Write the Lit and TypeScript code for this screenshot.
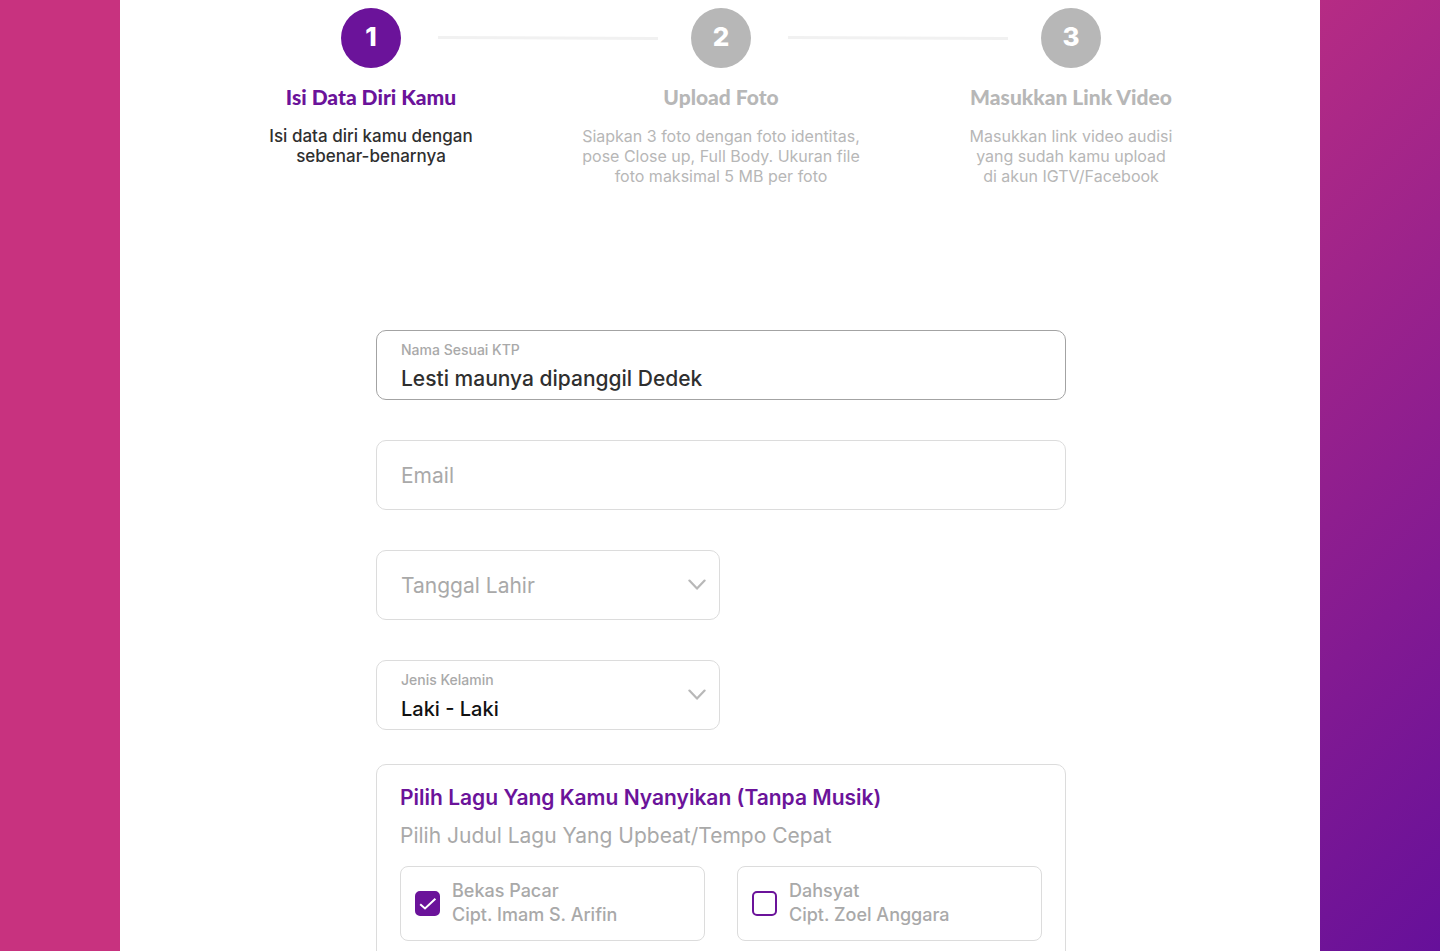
import { LitElement, html, css, svg } from "lit";
import { customElement, property, state } from "lit/decorators.js";
import { classMap } from "lit/directives/class-map.js";

interface Step {
  title: string;
  lines: string[];
}

interface Song {
  id: string;
  title: string;
  writer: string;
  picked: boolean;
}

const STEPS: Step[] = [
  { title: "Isi Data Diri Kamu", lines: ["Isi data diri kamu dengan", "sebenar-benarnya"] },
  {
    title: "Upload Foto",
    lines: [
      "Siapkan 3 foto dengan foto identitas,",
      "pose Close up, Full Body. Ukuran file",
      "foto maksimal 5 MB per foto",
    ],
  },
  {
    title: "Masukkan Link Video",
    lines: ["Masukkan link video audisi", "yang sudah kamu upload", "di akun IGTV/Facebook"],
  },
];

const chevron = html`
  <svg class="chevron" viewBox="0 0 18 12" width="18" height="12" aria-hidden="true">
    ${svg`<path d="M1.4 1.6 L9 9.6 L16.6 1.6" fill="none" stroke="#b8b8b8" stroke-width="2.2" stroke-linecap="round" stroke-linejoin="round"/>`}
  </svg>
`;

@customElement("step-progress")
class StepProgress extends LitElement {
  @property({ type: Number }) current = 1;

  static styles = css`
    :host {
      display: block;
      color: #b7b7b7;
    }
    .markers {
      display: flex;
      align-items: center;
      padding: 0 145px;
    }
    .marker {
      box-sizing: border-box;
      flex: none;
      display: grid;
      place-items: center;
      width: 60px;
      height: 60px;
      padding-bottom: 3px;
      border-radius: 50%;
      background: #b7b7b7;
      color: #fff;
      font-size: 26px;
      font-weight: 800;
    }
    .marker.active {
      background: #6b139a;
    }
    .connector {
      flex: 1;
      min-width: 0;
      height: 4px;
      margin: 0 33px 0 37px;
    }
    .steps {
      display: grid;
      grid-template-columns: repeat(3, 1fr);
      margin: 0;
      padding: 0;
      list-style: none;
      text-align: center;
    }
    .title {
      margin: 15px 0;
      font-family: Lato, sans-serif;
      font-size: 21px;
      font-weight: 900;
      line-height: 28px;
    }
    .text {
      margin: 0;
      font-size: 16px;
      font-weight: 400;
      line-height: 20px;
    }
    .line {
      display: block;
    }
    .active .title {
      color: #6b139a;
    }
    .active .text {
      color: #2f2f2f;
      font-size: 17px;
      font-weight: 500;
    }
  `;

  render() {
    return html`
      <div class="markers" aria-hidden="true">
        ${STEPS.map(
          (_, i) => html`
            ${i > 0
              ? html`<svg class="connector">
                  ${svg`<line x1="0" y1="1.5" x2="100%" y2="2.5" stroke="#f1f1f1" stroke-width="3"/>`}
                </svg>`
              : ""}
            <span class=${classMap({ marker: true, active: i + 1 === this.current })}>${i + 1}</span>
          `,
        )}
      </div>
      <ol class="steps">
        ${STEPS.map(
          (step, i) => html`
            <li class=${classMap({ active: i + 1 === this.current })}>
              <h2 class="title">${step.title}</h2>
              <p class="text">${step.lines.map((l) => html`<span class="line">${l}</span>`)}</p>
            </li>
          `,
        )}
      </ol>
    `;
  }
}

@customElement("app-root")
class AppRoot extends LitElement {
  @state() private songs: Song[] = [
    { id: "bekas-pacar", title: "Bekas Pacar", writer: "Cipt. Imam S. Arifin", picked: true },
    { id: "dahsyat", title: "Dahsyat", writer: "Cipt. Zoel Anggara", picked: false },
  ];

  static styles = css`
    :host {
      display: block;
      box-sizing: border-box;
      height: 100vh;
      overflow-y: auto;
      scrollbar-width: none;
      padding: 0 120px;
      background: linear-gradient(135deg, #c8327f 45%, #66109a 100%);
      font-family: Inter, sans-serif;
      color: #a9a9a9;
    }
    .page {
      box-sizing: border-box;
      min-height: 100%;
      padding: 8px 74px 40px 76px;
      background: #fff;
    }
    .form {
      display: flex;
      flex-direction: column;
      gap: 40px;
      max-width: 690px;
      margin: 144px auto 0;
    }
    .field {
      box-sizing: border-box;
      display: grid;
      grid-template-columns: 1fr auto;
      align-items: center;
      height: 70px;
      padding: 0 13px 0 24px;
      border: 1px solid #dcdcdc;
      border-radius: 10px;
    }
    .field.filled {
      border-color: #a3a3a3;
    }
    .field.half {
      width: calc(50% - 1px);
    }
    .stack {
      display: flex;
      flex-direction: column;
      gap: 3px;
      min-width: 0;
      padding-top: 4px;
    }
    .label {
      font-size: 14px;
      font-weight: 500;
      line-height: 20px;
    }
    .control {
      width: 100%;
      height: 32px;
      margin: 0;
      padding: 0;
      border: 0;
      outline: 0;
      background: none;
      appearance: none;
      font: inherit;
      font-size: 21px;
      font-weight: 500;
      color: #2f2f2f;
    }
    .control::placeholder {
      color: #a9a9a9;
      font-weight: 400;
      opacity: 1;
    }
    .control.empty {
      color: #a9a9a9;
      font-weight: 400;
    }
    .control.dark {
      color: #111;
      font-size: 20px;
    }
    .chevron {
      display: block;
    }
    .panel {
      min-width: 0;
      margin: -6px 0 0;
      padding: 17px 23px 24px;
      border: 1px solid #dcdcdc;
      border-radius: 10px;
    }
    .heading {
      margin: 0 0 6px;
      color: #6b139a;
      font-size: 21px;
      font-weight: 600;
      line-height: 32px;
    }
    .sub {
      margin: 0 0 14px;
      font-size: 21px;
      line-height: 32px;
    }
    .songs {
      display: grid;
      grid-template-columns: 1fr 1fr;
      gap: 32px;
    }
    .song {
      display: flex;
      align-items: center;
      gap: 12px;
      padding: 12px 14px 13px;
      border: 1px solid #dcdcdc;
      border-radius: 8px;
      font-size: 18px;
      font-weight: 500;
      line-height: 24px;
    }
    .box {
      display: grid;
    }
    .box > * {
      grid-area: 1 / 1;
    }
    .check {
      box-sizing: border-box;
      width: 25px;
      height: 25px;
      margin: 0;
      border: 2px solid #6b139a;
      border-radius: 5px;
      background: #fff;
      appearance: none;
    }
    .check:checked {
      background: #6b139a;
    }
    .tick {
      pointer-events: none;
    }
    .name {
      display: block;
    }
  `;

  private toggle(id: string) {
    this.songs = this.songs.map((s) => (s.id === id ? { ...s, picked: !s.picked } : s));
  }

  render() {
    return html`
      <main class="page">
        <step-progress current="1"></step-progress>
        <form class="form">
          <div class="field filled">
            <div class="stack">
              <label class="label" for="nama">Nama Sesuai KTP</label>
              <input class="control" id="nama" type="text" value="Lesti maunya dipanggil Dedek" />
            </div>
          </div>
          <div class="field">
            <input class="control" type="email" placeholder="Email" aria-label="Email" />
          </div>
          <div class="field half">
            <select class="control empty" aria-label="Tanggal Lahir">
              <option>Tanggal Lahir</option>
            </select>
            ${chevron}
          </div>
          <div class="field half">
            <div class="stack">
              <label class="label" for="kelamin">Jenis Kelamin</label>
              <select class="control dark" id="kelamin">
                <option>Laki - Laki</option>
                <option>Perempuan</option>
              </select>
            </div>
            ${chevron}
          </div>
          <section class="panel">
            <h3 class="heading">Pilih Lagu Yang Kamu Nyanyikan (Tanpa Musik)</h3>
            <p class="sub">Pilih Judul Lagu Yang Upbeat/Tempo Cepat</p>
            <div class="songs">
              ${this.songs.map(
                (s) => html`
                  <label class="song" for=${s.id}>
                    <span class="box">
                      <input
                        class="check"
                        type="checkbox"
                        id=${s.id}
                        .checked=${s.picked}
                        @change=${() => this.toggle(s.id)}
                      />
                      ${s.picked
                        ? html`<svg class="tick" viewBox="0 0 25 25" width="25" height="25" aria-hidden="true">
                            ${svg`<path d="M5.2 13.2 L10 17.4 L20.4 7.8" fill="none" stroke="#fff" stroke-width="2"/>`}
                          </svg>`
                        : ""}
                    </span>
                    <span>
                      <span class="name">${s.title}</span>
                      <span class="name">${s.writer}</span>
                    </span>
                  </label>
                `,
              )}
            </div>
          </section>
        </form>
      </main>
    `;
  }
}
